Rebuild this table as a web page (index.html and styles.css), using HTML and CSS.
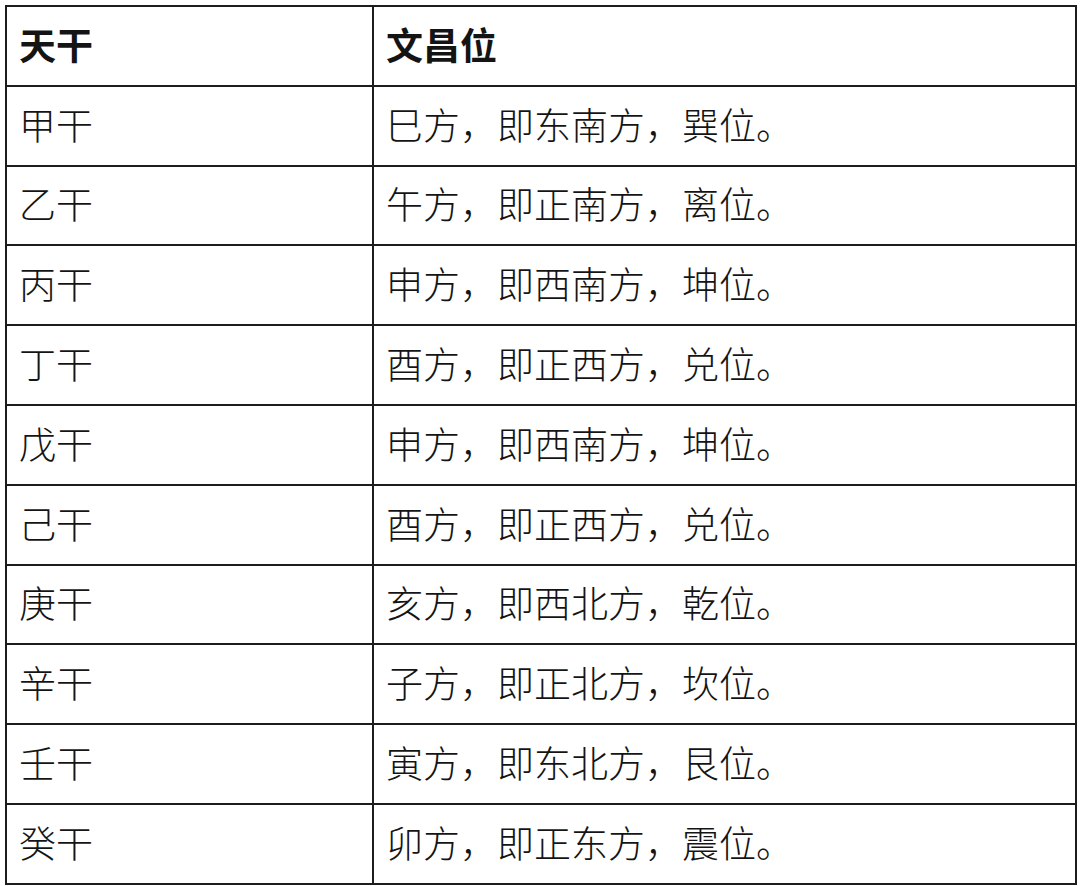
FILE: index.html
```html
<!DOCTYPE html>
<html lang="zh-CN">
<head>
<meta charset="utf-8">
<link rel="stylesheet" href="styles.css">
</head>
<body>
<table class="tbl">
  <thead>
    <tr><th class="c1">天干</th><th class="c2">文昌位</th></tr>
  </thead>
  <tbody>
    <tr><td>甲干</td><td>巳方，即东南方，巽位。</td></tr>
    <tr><td>乙干</td><td>午方，即正南方，离位。</td></tr>
    <tr><td>丙干</td><td>申方，即西南方，坤位。</td></tr>
    <tr><td>丁干</td><td>酉方，即正西方，兑位。</td></tr>
    <tr><td>戊干</td><td>申方，即西南方，坤位。</td></tr>
    <tr><td>己干</td><td>酉方，即正西方，兑位。</td></tr>
    <tr><td>庚干</td><td>亥方，即西北方，乾位。</td></tr>
    <tr><td>辛干</td><td>子方，即正北方，坎位。</td></tr>
    <tr><td>壬干</td><td>寅方，即东北方，艮位。</td></tr>
    <tr><td>癸干</td><td>卯方，即正东方，震位。</td></tr>
  </tbody>
</table>
</body>
</html>
```

FILE: styles.css
```css
html, body {
  margin: 0;
  padding: 0;
  background: #ffffff;
}
body {
  padding: 5px 0 0 5px;
  font-family: "Noto Sans CJK SC", "Noto Sans", sans-serif;
  color: #141414;
}
.tbl {
  border-collapse: collapse;
  width: 1072px;
  table-layout: fixed;
}
.tbl th, .tbl td {
  border: 2px solid #1c1c1c;
  height: 79.8px;
  box-sizing: border-box;
  padding: 0 0 3px 12px;
  text-align: left;
  vertical-align: middle;
  font-size: 37px;
  line-height: 1;
  white-space: nowrap;
  text-spacing-trim: space-all;
}
.tbl th {
  font-weight: 700;
}
.tbl td {
  font-weight: 300;
}
.c1 { width: 367px; }
.c2 { width: auto; }
```
